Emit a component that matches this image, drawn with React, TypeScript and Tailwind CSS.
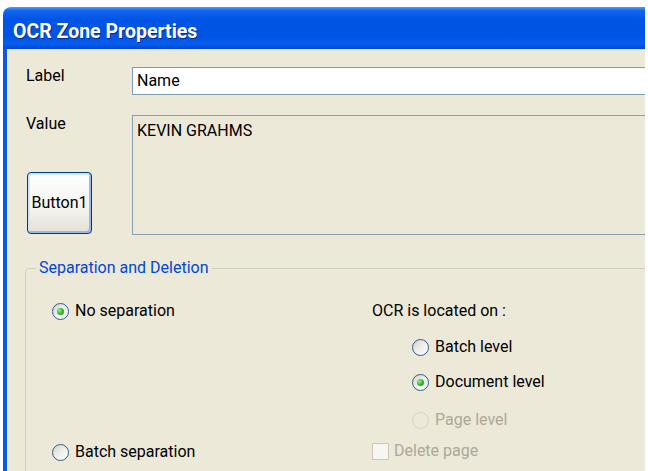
import clsx from "clsx";

function Radio({ checked, disabled }: { checked?: boolean; disabled?: boolean }) {
  return (
    <span
      className={clsx(
        "flex h-[17px] w-[17px] shrink-0 items-center justify-center rounded-full border",
        disabled
          ? "border-[#d6d3c6] bg-[#ece9d8]"
          : "border-[#2c5d8c] bg-[linear-gradient(135deg,#d5d2c8_0%,#eeece6_45%,#ffffff_100%)]"
      )}
    >
      {checked && (
        <span className="h-[7px] w-[7px] rounded-full bg-[radial-gradient(circle_at_35%_35%,#8df08d_0%,#2fb42f_55%,#1a8a1a_100%)]" />
      )}
    </span>
  );
}

function Option({
  label,
  checked,
  disabled,
  className,
}: {
  label: string;
  checked?: boolean;
  disabled?: boolean;
  className?: string;
}) {
  return (
    <div className={clsx("flex h-[20px] items-center gap-[6px]", className)}>
      <Radio checked={checked} disabled={disabled} />
      <span className={disabled ? "text-[#aca899]" : "text-black"}>{label}</span>
    </div>
  );
}

export default function App() {
  return (
    <div className="h-screen w-full overflow-hidden bg-white pl-[3px] pt-[7px] font-['Roboto',sans-serif] text-[16px] leading-[18px] text-black">
      <div className="h-[464px] w-[642px] overflow-hidden">
        <div className="flex h-full w-[720px] flex-col">
          {/* title bar */}
          <div className="h-[42px] shrink-0 rounded-tl-[8px] rounded-tr-[8px] bg-[linear-gradient(180deg,#4a9bff_0%,#1165f0_9%,#0055e5_30%,#0054e3_70%,#065ef0_88%,#0046d0_100%)] pl-[10px] pt-[15px]">
            <span className="text-[19.5px] font-bold leading-[20px] text-white [text-shadow:1px_1px_0_#0a2a8a]">
              OCR Zone Properties
            </span>
          </div>

          {/* body */}
          <div className="flex-1 border-l-[4px] border-[#0b58e6] bg-[#ece9d8] pl-[18px] pt-[18px]">
            <div className="flex">
              <div className="w-[107px] shrink-0 pl-[1px]">Label</div>
              <div className="flex h-[28px] flex-1 items-center border border-[#7f9db9] bg-white pl-[4px]">
                Name
              </div>
            </div>

            <div className="mt-[20px] flex">
              <div className="flex h-[120px] w-[107px] shrink-0 flex-col justify-between">
                <div className="pl-[1px]">Value</div>
                <button className="mb-[1px] ml-[2px] flex h-[62px] w-[65px] items-center justify-center rounded-[4px] border border-[#003c74] bg-[linear-gradient(180deg,#ffffff_0%,#f4f3ee_60%,#e3e0d5_100%)] shadow-[inset_-2px_-2px_0_#98b8ea,inset_2px_2px_0_#cee7ff]">
                  Button1
                </button>
              </div>
              <div className="h-[120px] flex-1 border border-[#8c9fb0] bg-[#ece9d8] pl-[4px] pt-[6px]">
                KEVIN GRAHMS
              </div>
            </div>

            <fieldset className="mt-[24px] h-[260px] rounded-[4px] border border-[#d0d0bf] px-[10px] pt-[24px]">
              <legend className="px-[3px] leading-[18px] text-[#0046d5]">
                Separation and Deletion
              </legend>
              <div className="grid grid-cols-[320px_1fr] pl-[16px]">
                <div>
                  <Option label="No separation" checked />
                  <Option label="Batch separation" className="mt-[121px]" />
                </div>
                <div>
                  <div className="flex h-[20px] items-center">OCR is located on :</div>
                  <div className="pl-[40px]">
                    <Option label="Batch level" className="mt-[16px]" />
                    <Option label="Document level" checked className="mt-[15px]" />
                    <Option label="Page level" disabled className="mt-[18px]" />
                  </div>
                  <div className="mt-[11px] flex h-[20px] items-center gap-[5px]">
                    <span className="h-[17px] w-[17px] shrink-0 border border-[#cac8bb] bg-[#f7f6f1]" />
                    <span className="text-[#aca899]">Delete page</span>
                  </div>
                </div>
              </div>
            </fieldset>
          </div>
        </div>
      </div>
    </div>
  );
}
